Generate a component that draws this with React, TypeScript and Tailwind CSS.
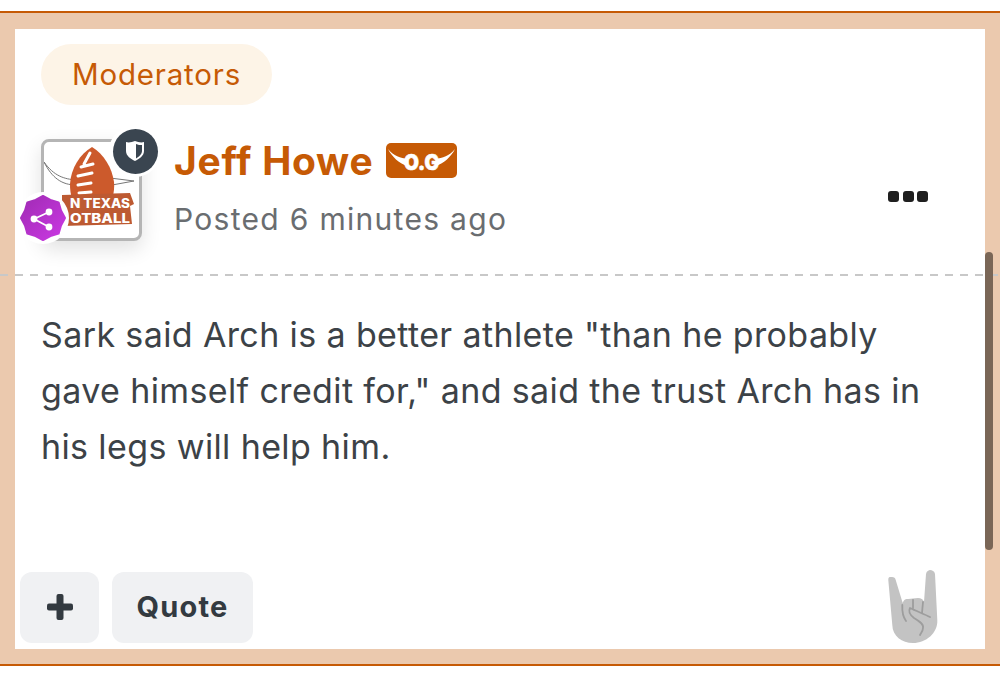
import React from "react";

function TeamLogo() {
  return (
    <svg viewBox="0 0 95 96" className="w-full h-full">
      <path d="M0 20 C10 34 20 37 32 38 L32 43 C18 43 8 36 0 20 Z" fill="#fff" stroke="#777" strokeWidth="1" />
      <path d="M66 36 L90 39 L68 43 Z" fill="#fff" stroke="#777" strokeWidth="1" />
      <path d="M48 5 C36 12 27 26 26 42 C26 52 28 60 34 68 L62 68 C68 60 71 50 70 40 C68 26 60 12 48 5 Z" fill="#cc5a2c" />
      <path d="M46 11 L40 22 M37 25 L49 22 M34 34 L48 31 M34 43 L47 41 M35 51 L47 50" stroke="#fff" strokeWidth="3" strokeLinecap="round" fill="none" />
      <path d="M18 53 L86 51 L90 62 L86 64 L88 82 L18 84 Z" fill="#bd5a32" />
      <text x="56" y="66" textAnchor="middle" fill="#fff" fontFamily="Inter, sans-serif" fontSize="12.5" fontWeight="800" textLength="60" lengthAdjust="spacingAndGlyphs">N TEXAS</text>
      <text x="56" y="81" textAnchor="middle" fill="#fff" fontFamily="Inter, sans-serif" fontSize="12.5" fontWeight="800" textLength="60" lengthAdjust="spacingAndGlyphs">OTBALL</text>
    </svg>
  );
}

function HornsHand() {
  return (
    <svg viewBox="0 0 50 74" className="w-[50px] h-[74px]">
      <path
        d="M0.3 10 C0 6 3 7 4 7 C6 7 7.5 8 7.7 10 L14.7 33 C16 29 18 29 20 29 C24 29 26 28 30 28 C33 28 35 29 36 32 L38 4 C38.5 1 41 0 42 0 C44 0 46.5 1 47 4 L49.3 50 C50 63 38 73 25 73 C14 73 4.5 66 4.3 55 Z"
        fill="#c3c3c3"
      />
      <path
        d="M14.3 35 C14 42 15 47 18 51 M22 38 C20 42 22 45 26 48 C31 51 36 54 35 58 C35 61 33 63 32 65 M25 30 V38 M35 32 L34 43 M22 38 C28 41 36 44 42 47"
        stroke="#9d9d9d"
        strokeWidth="1.8"
        fill="none"
        strokeLinecap="round"
      />
    </svg>
  );
}

export default function App() {
  return (
    <div className="min-h-[692px] bg-white pt-[11px] font-['Inter',sans-serif] relative overflow-hidden">
      <div className="border-y-2 border-[#c65a05] bg-[#ebc9ae] px-[15px] pt-[16px] pb-[15px] relative">
        <div className="bg-white h-[620px] flex flex-col relative">
          <div className="px-[26px] pt-[15px]">
            <span className="inline-flex items-center h-[61px] pl-[31px] pr-[31px] rounded-full bg-[#fdf4e7] text-[#c65a05] text-[29.5px] tracking-[0.8px]">
              Moderators
            </span>
          </div>

          <div className="flex items-start px-[26px] pt-[34px] h-[170px]">
            <div className="relative w-[101px] h-[102px] mr-[32px] shrink-0">
              <div className="w-full h-full rounded-lg border-[3px] border-[#b5b5b5] bg-white shadow-[0_8px_20px_rgba(0,0,0,0.12)] overflow-hidden">
                <TeamLogo />
              </div>
              <div className="absolute -top-[14px] -right-[19px] w-[52px] h-[52px] rounded-full bg-white flex items-center justify-center">
                <div className="w-[45px] h-[45px] rounded-full bg-[#3a4550] flex items-center justify-center">
                  <svg viewBox="0 0 18 20" className="w-[18px] h-[20px]">
                    <path d="M0 1 C3 2 6 1 9 0 C12 1 15 2 18 1 L18 10 C18 15 13 18 9 20 C5 18 0 15 0 10 Z" fill="#fff" />
                    <path d="M10 3 C12 4 14 4 16 4 L16 10 C16 13 13 16 10 17.5 Z" fill="#3a4550" />
                  </svg>
                </div>
              </div>
              <div className="absolute top-[53px] -left-[24px] w-[52px] h-[52px] rounded-full bg-white flex items-center justify-center">
                <svg viewBox="0 0 46 46" className="w-[46px] h-[46px]">
                  <defs>
                    <linearGradient id="ambassador" x1="0" y1="0" x2="1" y2="1">
                      <stop offset="0" stopColor="#9f2bb3" />
                      <stop offset="1" stopColor="#cb39e4" />
                    </linearGradient>
                  </defs>
                  <path
                    d="M23 1 L30.4 5 L38.6 7.4 L41 15.6 L45 23 L41 30.4 L38.6 38.6 L30.4 41 L23 45 L15.6 41 L7.4 38.6 L5 30.4 L1 23 L5 15.6 L7.4 7.4 L15.6 5 Z"
                    fill="url(#ambassador)"
                    stroke="url(#ambassador)"
                    strokeWidth="2"
                    strokeLinejoin="round"
                  />
                  <path d="M14 24 L29 17 M14 24 L29 32" stroke="#fff" strokeWidth="1.8" />
                  <circle cx="14" cy="24" r="3.4" fill="#fff" />
                  <circle cx="29" cy="17" r="3.4" fill="#fff" />
                  <circle cx="29" cy="32" r="3.4" fill="#fff" />
                </svg>
              </div>
            </div>

            <div className="flex-1">
              <div className="flex items-center h-[44px] -mt-[1px]">
                <span className="text-[#c65a05] text-[39px] font-bold leading-none tracking-[0.7px]">Jeff Howe</span>
                <span className="ml-[13px] w-[71px] h-[35px] rounded-[5px] bg-[#c65a05] flex items-center justify-center">
                  <svg viewBox="0 0 71 35" className="w-[71px] h-[35px]">
                    <path d="M2 6 C8 13 14 15 22 16 L21 23 C13 20 6 14 2 6 Z M69 6 C63 13 57 15 49 16 L50 23 C58 20 65 14 69 6 Z" fill="#fff" />
                    <text x="35.5" y="27" textAnchor="middle" fill="#fff" stroke="#fff" strokeWidth="0.6" fontFamily="Inter, sans-serif" fontSize="21" fontWeight="900" textLength="35" lengthAdjust="spacingAndGlyphs">O.G</text>
                  </svg>
                </span>
              </div>
              <div className="text-[#6a6d70] text-[30px] tracking-[1.3px] leading-[44px] mt-[15px]">Posted 6 minutes ago</div>
            </div>

            <div className="flex gap-[3.5px] mt-[52px] mr-[31px]">
              <div className="w-[11px] h-[11px] rounded-[3px] bg-[#1f1f1f]" />
              <div className="w-[11px] h-[11px] rounded-[3px] bg-[#1f1f1f]" />
              <div className="w-[11px] h-[11px] rounded-[3px] bg-[#1f1f1f]" />
            </div>
          </div>

          <p className="px-[26px] pt-[32px] text-[#3c4247] text-[34px] tracking-[0.38px] leading-[56px] flex-1 max-w-[935px]">
            Sark said Arch is a better athlete "than he probably gave himself credit for," and said the trust Arch has in his legs will help him.
          </p>

          <div className="flex items-center justify-between pl-[5px] pr-[47px] pb-[5px]">
            <div className="flex gap-[13px]">
              <button className="w-[79px] h-[71px] rounded-xl bg-[#f0f1f3] flex items-center justify-center">
                <svg viewBox="0 0 28 28" className="w-[28px] h-[28px]">
                  <rect x="10.5" y="1" width="7" height="26" rx="2" fill="#333a40" />
                  <rect x="1" y="10.5" width="26" height="7" rx="2" fill="#333a40" />
                </svg>
              </button>
              <button className="w-[141px] h-[71px] rounded-xl bg-[#f0f1f3] text-[#333a40] text-[29px] font-bold tracking-[1.2px]">Quote</button>
            </div>
            <HornsHand />
          </div>
        </div>
      </div>

      {/* divider and scrollbar run over the peach band */}
      <div className="absolute left-0 right-0 top-[274px] h-[2px] bg-[repeating-linear-gradient(90deg,#c8c8c8_0_8px,transparent_8px_15px)]" />
      <div className="absolute left-[985px] top-[252px] w-[8px] h-[298px] rounded-full bg-[#7a6656]" />
    </div>
  );
}
